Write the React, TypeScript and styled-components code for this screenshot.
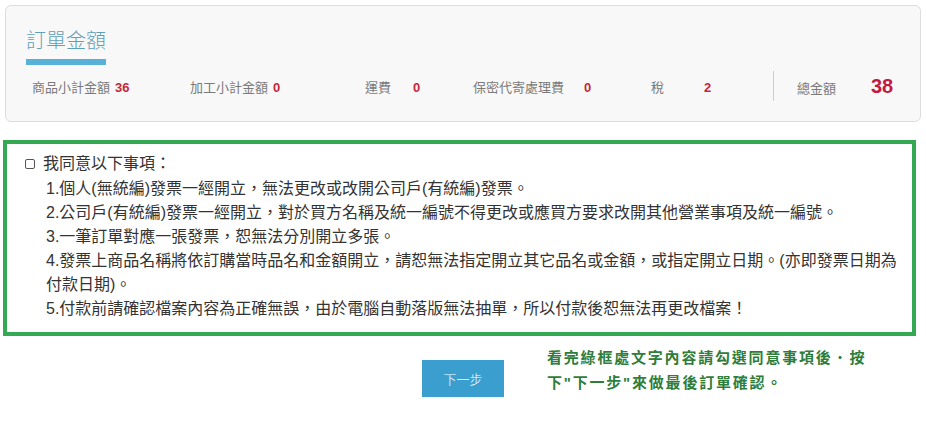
import React, { useState } from 'react';
import styled, { createGlobalStyle } from 'styled-components';

const GlobalStyle = createGlobalStyle`
  body {
    margin: 0;
    background: #fff;
    font-family: 'Liberation Sans', 'Noto Sans CJK TC', sans-serif;
    color: #333;
  }
`;

const Page = styled.div`
  width: 926px;
`;

const SummaryCard = styled.section`
  margin: 5px 5px 0 5px;
  padding: 21px 20px 20px 20px;
  background: #f8f8f8;
  border: 1px solid #dcdcdc;
  border-radius: 6px;
`;

const Title = styled.h2`
  margin: 0;
  font-size: 20px;
  line-height: 28px;
  font-weight: 300;
  color: #5f9fb9;
`;

const TitleBar = styled.div`
  width: 80px;
  height: 6px;
  margin-top: 4px;
  background: #58b1d6;
`;

const AmountRow = styled.div`
  display: flex;
  align-items: center;
  height: 30px;
  margin-top: 6px;
  padding-left: 6px;
`;

const Amount = styled.div<{ $width?: number }>`
  display: flex;
  align-items: baseline;
  gap: 5px;
  width: ${p => (p.$width ? `${p.$width}px` : 'auto')};
  flex-shrink: 0;
`;

const Label = styled.span<{ $minWidth?: number }>`
  font-size: 13px;
  color: #7a7a7a;
  min-width: ${p => (p.$minWidth ? `${p.$minWidth - 5}px` : '0')};
`;

const Value = styled.span`
  font-size: 13px;
  font-weight: bold;
  color: #c3283a;
`;

const TotalValue = styled.span`
  font-size: 20px;
  font-weight: bold;
  color: #c2193f;
`;

const Divider = styled.div`
  width: 1px;
  height: 30px;
  background: #cfcfcf;
  margin-right: 23px;
`;

const TermsBox = styled.section`
  margin: 18px 10px 0 3px;
  padding: 7px 8px 11px 18px;
  border: 4px solid #34a853;
  font-size: 16px;
  line-height: 24px;
  color: #333;
`;

const AgreeLabel = styled.label`
  display: flex;
  align-items: center;
  gap: 8px;
  height: 26px;
  cursor: pointer;
`;

const CheckBox = styled.input`
  appearance: none;
  width: 10px;
  height: 10px;
  margin: 0;
  border: 1px solid #555;
  border-radius: 2px;
  background: #fff;

  &:checked {
    background: #3a9fcf;
    border-color: #3a9fcf;
  }
`;

const TermsList = styled.ol`
  list-style: none;
  margin: 0;
  padding: 0 0 0 21px;
`;

const Term = styled.li`
  margin: 0;
`;

const Footer = styled.div`
  display: grid;
  grid-template-columns: 1fr auto 1fr;
  align-items: start;
  margin-top: 9px;
`;

const NextButton = styled.button`
  grid-column: 2;
  width: 82px;
  height: 37px;
  margin-top: 15px;
  border: none;
  background: #3a9fcf;
  color: #fff;
  font-family: inherit;
  font-size: 13px;
  font-weight: 300;
  cursor: pointer;

  &:hover {
    opacity: 0.9;
  }
`;

const Note = styled.p`
  grid-column: 3;
  width: 330px;
  margin: 0 0 0 43px;
  font-size: 15px;
  line-height: 25px;
  font-weight: bold;
  letter-spacing: 1.8px;
  color: #2f7d3a;
`;

const amounts = [
  { label: '商品小計金額', value: '36', width: 158 },
  { label: '加工小計金額', value: '0', width: 175 },
  { label: '運費', value: '0', width: 108, labelWidth: 48 },
  { label: '保密代寄處理費', value: '0', width: 178, labelWidth: 111 },
  { label: '稅', value: '2', width: 122, labelWidth: 53 },
];

const terms = [
  '1.個人(無統編)發票一經開立，無法更改或改開公司戶(有統編)發票。',
  '2.公司戶(有統編)發票一經開立，對於買方名稱及統一編號不得更改或應買方要求改開其他營業事項及統一編號。',
  '3.一筆訂單對應一張發票，恕無法分別開立多張。',
  '4.發票上商品名稱將依訂購當時品名和金額開立，請恕無法指定開立其它品名或金額，或指定開立日期。(亦即發票日期為付款日期)。',
  '5.付款前請確認檔案內容為正確無誤，由於電腦自動落版無法抽單，所以付款後恕無法再更改檔案！',
];

export default function App() {
  const [agreed, setAgreed] = useState(false);

  return (
    <Page>
      <GlobalStyle />
      <SummaryCard>
        <Title>訂單金額</Title>
        <TitleBar />
        <AmountRow>
          {amounts.map(a => (
            <Amount key={a.label} $width={a.width}>
              <Label $minWidth={a.labelWidth}>{a.label}</Label>
              <Value>{a.value}</Value>
            </Amount>
          ))}
          <Divider />
          <Amount>
            <Label $minWidth={74}>總金額</Label>
            <TotalValue>38</TotalValue>
          </Amount>
        </AmountRow>
      </SummaryCard>

      <TermsBox>
        <AgreeLabel>
          <CheckBox type="checkbox" checked={agreed} onChange={e => setAgreed(e.target.checked)} />
          我同意以下事項：
        </AgreeLabel>
        <TermsList>
          {terms.map(t => (
            <Term key={t}>{t}</Term>
          ))}
        </TermsList>
      </TermsBox>

      <Footer>
        <NextButton type="button">下一步</NextButton>
        <Note>看完綠框處文字內容請勾選同意事項後．按下"下一步"來做最後訂單確認。</Note>
      </Footer>
    </Page>
  );
}
